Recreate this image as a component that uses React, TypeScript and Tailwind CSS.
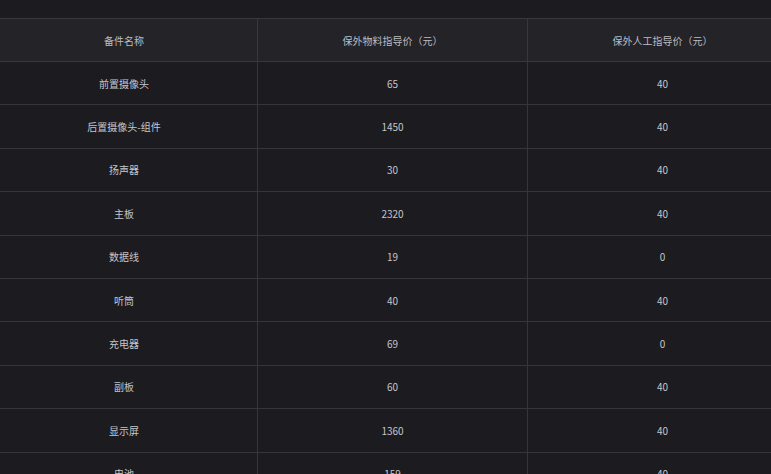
const rows = [
  { name: "前置摄像头", material: "65", labor: "40" },
  { name: "后置摄像头-组件", material: "1450", labor: "40" },
  { name: "扬声器", material: "30", labor: "40" },
  { name: "主板", material: "2320", labor: "40" },
  { name: "数据线", material: "19", labor: "0" },
  { name: "听筒", material: "40", labor: "40" },
  { name: "充电器", material: "69", labor: "0" },
  { name: "副板", material: "60", labor: "40" },
  { name: "显示屏", material: "1360", labor: "40" },
  { name: "电池", material: "159", labor: "40" },
];

const App = () => {
  return (
    <div
      className="w-[771px] h-[474px] overflow-hidden bg-[#1c1b20] pt-[18px]"
      style={{ fontFamily: '"Noto Sans CJK SC", "Noto Sans", sans-serif' }}
    >
      <table className="ml-[-10px] w-[807px] border-collapse text-[10px] text-center table-fixed">
        <colgroup>
          <col className="w-[267px]" />
          <col className="w-[270px]" />
          <col className="w-[270px]" />
        </colgroup>
        <thead>
          <tr className="bg-[#242328] text-[#bdbcc0]">
            <th className="h-[43px] font-normal border border-[#38373d]">备件名称</th>
            <th className="h-[43px] font-normal border border-[#38373d]">保外物料指导价（元）</th>
            <th className="h-[43px] font-normal border border-[#38373d]">保外人工指导价（元）</th>
          </tr>
        </thead>
        <tbody className="text-[#c6c5c9]">
          {rows.map((row) => (
            <tr key={row.name}>
              <td className="h-[43.4px] border border-[#36353b]">{row.name}</td>
              <td className="h-[43.4px] border border-[#36353b]">{row.material}</td>
              <td className="h-[43.4px] border border-[#36353b]">{row.labor}</td>
            </tr>
          ))}
        </tbody>
      </table>
    </div>
  );
};

export default App;
